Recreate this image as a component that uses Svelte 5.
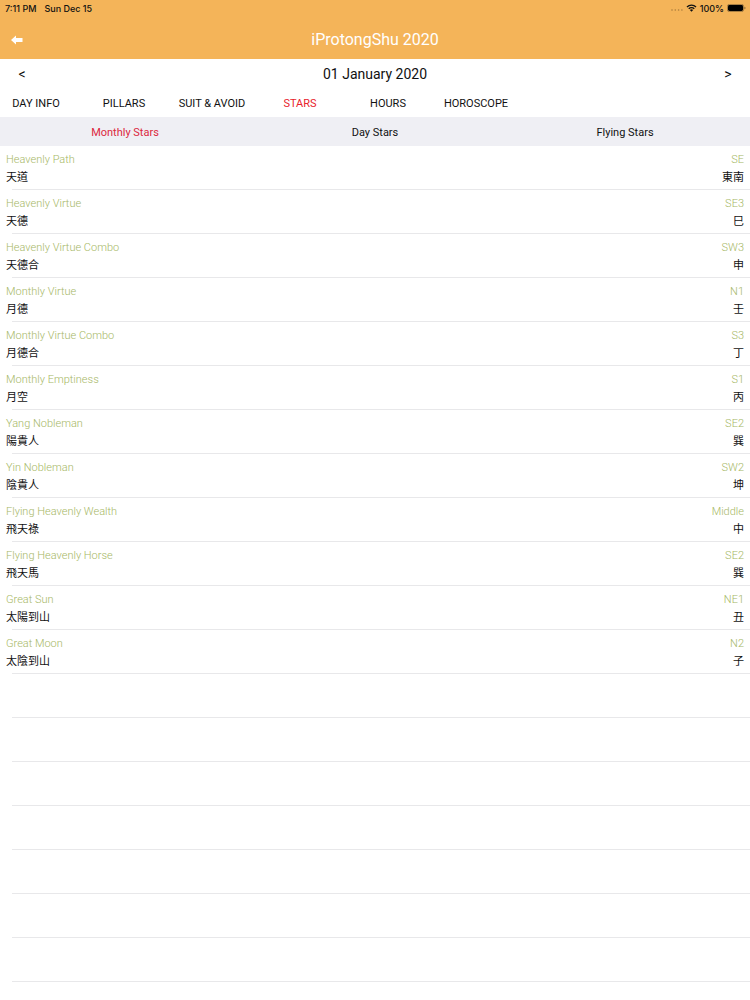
<script lang="ts">
  type Star = { name: string; chinese: string; direction: string; sign: string };

  const tabs = ["DAY INFO", "PILLARS", "SUIT & AVOID", "STARS", "HOURS", "HOROSCOPE"];
  const starTabs = ["Monthly Stars", "Day Stars", "Flying Stars"];

  const stars: Star[] = [
    { name: "Heavenly Path", chinese: "天道", direction: "SE", sign: "東南" },
    { name: "Heavenly Virtue", chinese: "天德", direction: "SE3", sign: "巳" },
    { name: "Heavenly Virtue Combo", chinese: "天德合", direction: "SW3", sign: "申" },
    { name: "Monthly Virtue", chinese: "月德", direction: "N1", sign: "壬" },
    { name: "Monthly Virtue Combo", chinese: "月德合", direction: "S3", sign: "丁" },
    { name: "Monthly Emptiness", chinese: "月空", direction: "S1", sign: "丙" },
    { name: "Yang Nobleman", chinese: "陽貴人", direction: "SE2", sign: "巽" },
    { name: "Yin Nobleman", chinese: "陰貴人", direction: "SW2", sign: "坤" },
    { name: "Flying Heavenly Wealth", chinese: "飛天祿", direction: "Middle", sign: "中" },
    { name: "Flying Heavenly Horse", chinese: "飛天馬", direction: "SE2", sign: "巽" },
    { name: "Great Sun", chinese: "太陽到山", direction: "NE1", sign: "丑" },
    { name: "Great Moon", chinese: "太陰到山", direction: "N2", sign: "子" },
  ];

  const emptyRows = Array(7).fill(0);

  let activeTab = $state("STARS");
  let activeStarTab = $state("Monthly Stars");
  let date = $state(new Date(2020, 0, 1));

  let dateLabel = $derived(
    date.toLocaleDateString("en-GB", { day: "2-digit", month: "long", year: "numeric" }),
  );

  function moveDay(step: number) {
    date = new Date(date.getFullYear(), date.getMonth(), date.getDate() + step);
  }
</script>

<div class="app">
  <header>
    <div class="status">
      <div class="status-group">
        <span>7:11 PM</span>
        <span>Sun Dec 15</span>
      </div>
      <div class="status-right">
        <svg class="signal" viewBox="0 0 12 4" aria-hidden="true">
          <circle cx="1" cy="2" r="0.8" />
          <circle cx="4.3" cy="2" r="0.8" />
          <circle cx="7.6" cy="2" r="0.8" />
          <circle cx="10.9" cy="2" r="0.8" />
        </svg>
        <svg class="wifi" viewBox="0 0 20 15" aria-hidden="true">
          <path d="M1.5 5.5a12 12 0 0 1 17 0M4.8 9a7.3 7.3 0 0 1 10.4 0" />
          <path class="fill" d="M10 14.5l-3.1-3.3a4.4 4.4 0 0 1 6.2 0z" />
        </svg>
        <span>100%</span>
        <svg class="battery" viewBox="0 0 19 8" aria-hidden="true">
          <rect class="shell" x="0.4" y="0.4" width="16.2" height="7.2" rx="2" />
          <rect x="1" y="1" width="15" height="6" rx="1.4" />
          <path class="cap" d="M17.4 2.8q1.2 .3 1.2 1.2t-1.2 1.2z" />
        </svg>
      </div>
    </div>
    <div class="title-bar">
      <button class="back" type="button" aria-label="Back">
        <svg viewBox="0 0 12 10" aria-hidden="true">
          <path d="M0 5L5 .6V3h6.5v4H5v2.4z" />
        </svg>
      </button>
      <h1>iProtongShu 2020</h1>
    </div>
  </header>

  <div class="date-bar">
    <button type="button" aria-label="Previous day" onclick={() => moveDay(-1)}>&lt;</button>
    <span>{dateLabel}</span>
    <button type="button" aria-label="Next day" onclick={() => moveDay(1)}>&gt;</button>
  </div>

  <nav class="tabs">
    {#each tabs as tab}
      <button type="button" class:active={tab === activeTab} onclick={() => (activeTab = tab)}>
        {tab}
      </button>
    {/each}
  </nav>

  <nav class="star-tabs">
    {#each starTabs as tab}
      <button
        type="button"
        class:active={tab === activeStarTab}
        onclick={() => (activeStarTab = tab)}
      >
        {tab}
      </button>
    {/each}
  </nav>

  <ul>
    {#each stars as star}
      <li>
        <div class="line label">
          <span>{star.name}</span>
          <span>{star.direction}</span>
        </div>
        <div class="line">
          <span>{star.chinese}</span>
          <span>{star.sign}</span>
        </div>
      </li>
    {/each}
    {#each emptyRows as _}
      <li aria-hidden="true"></li>
    {/each}
  </ul>
</div>

<style>
  :global(body) {
    margin: 0;
    background: #fff;
  }

  .app {
    min-height: 100vh;
    box-sizing: border-box;
    overflow-x: hidden;
    font-family: Roboto, "Noto Sans CJK TC", sans-serif;
    font-size: 11px;
    color: #111;
  }

  button {
    margin: 0;
    padding: 0;
    border: none;
    background: none;
    font: inherit;
    color: inherit;
    cursor: pointer;
  }

  header {
    background: #f4b459;
  }

  .status {
    display: flex;
    justify-content: space-between;
    align-items: center;
    height: 16px;
    padding: 0 4px 0 5px;
    font-family: Inter, sans-serif;
    font-size: 9px;
    font-weight: 500;
  }

  .status-group {
    display: flex;
    gap: 8px;
  }

  .status-right {
    display: flex;
    align-items: center;
    gap: 3px;
  }

  .signal {
    width: 12px;
    height: 4px;
    padding-top: 4px;
    fill: #a97c3c;
  }

  .wifi {
    width: 11px;
    height: 8px;
    fill: none;
    stroke: #111;
    stroke-width: 2.4;
  }

  .wifi .fill {
    fill: #111;
    stroke: none;
  }

  .battery {
    width: 19px;
    height: 8px;
  }

  .battery .shell {
    fill: none;
    stroke: #8a6a3a;
    stroke-width: 0.8;
  }

  .battery .cap {
    fill: #8a6a3a;
  }

  .title-bar {
    display: grid;
    grid-template-columns: 34px 1fr 34px;
    align-items: center;
    height: 43px;
    padding-top: 4px;
    box-sizing: border-box;
  }

  .back {
    height: 38px;
  }

  .back svg {
    display: block;
    width: 12px;
    height: 10px;
    margin: 0 auto;
    fill: #fff;
  }

  h1 {
    margin: 0;
    font-size: 16px;
    line-height: 20px;
    font-weight: 400;
    text-align: center;
    color: #fff;
  }

  .date-bar {
    display: grid;
    grid-template-columns: 44px 1fr 44px;
    align-items: center;
    height: 30px;
    font-size: 14px;
    text-align: center;
  }

  .tabs {
    display: flex;
    height: 28px;
    margin-left: -8px;
  }

  .tabs button {
    flex: 0 0 88px;
  }

  .star-tabs {
    display: flex;
    box-sizing: border-box;
    height: 29px;
    padding-top: 2px;
    background: #efeff4;
  }

  .star-tabs button {
    flex: 1;
  }

  .tabs .active {
    color: #e8222c;
  }

  .star-tabs .active {
    color: #dc2840;
  }

  ul {
    margin: 0;
    padding: 0;
    list-style: none;
  }

  li {
    box-sizing: border-box;
    height: 44px;
    padding: 5px 6px 0;
    background: linear-gradient(#e8e8ea, #e8e8ea) 12px 100% / 100% 1px no-repeat;
  }

  .line {
    display: flex;
    justify-content: space-between;
    line-height: 18px;
  }

  .label {
    font-weight: 300;
    color: #a6b765;
  }
</style>
